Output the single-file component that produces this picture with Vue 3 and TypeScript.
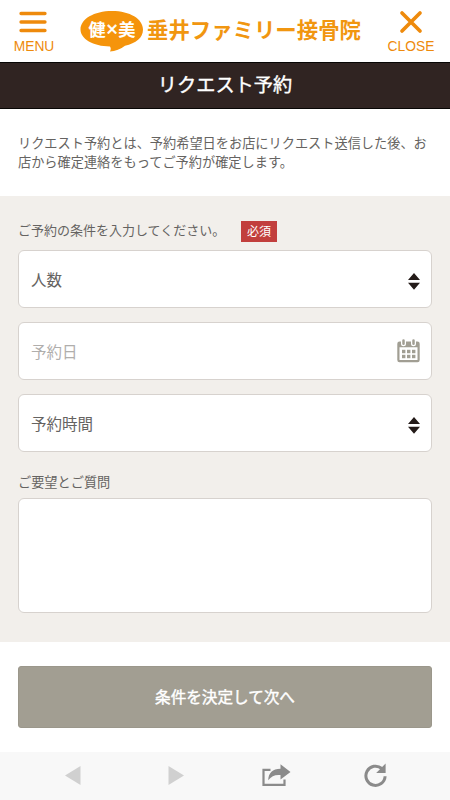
<script setup lang="ts">
import { ref } from 'vue'

interface Field {
  label: string
  kind: 'select' | 'date'
}

const fields: Field[] = [
  { label: '人数', kind: 'select' },
  { label: '予約日', kind: 'date' },
  { label: '予約時間', kind: 'select' },
]
const message = ref<string>('')
const dotColumns: number[] = [5, 10, 15]
const dotRows: number[] = [10.8, 15.8]
</script>

<template>
  <div class="screen">
    <header class="header">
      <button class="nav-button menu" type="button">
        <svg width="28" height="22" viewBox="0 0 28 22">
          <path d="M2 2.5H26M2 11H26M2 19.5H26" />
        </svg>
        <span>MENU</span>
      </button>
      <div class="logo">
        <div class="bubble">
          <svg width="64" height="41" viewBox="0 0 64 41">
            <path d="M32 0C14 0 .5 8 .5 18.5C.5 28 13 35.2 30 35.5C31 37 31 38.5 30 40.5C35 40.2 41 38 45 34.8C56 32 63 27 63 18.5C63 8 50 0 32 0Z" />
          </svg>
          <div class="bubble-text"><b>健</b><i>×</i><b>美</b></div>
        </div>
        <span class="logo-name">垂井ファミリー接骨院</span>
      </div>
      <button class="nav-button close" type="button">
        <svg width="24" height="24" viewBox="0 0 24 24">
          <path d="M3 3L21 21M21 3L3 21" />
        </svg>
        <span>CLOSE</span>
      </button>
    </header>

    <h1 class="title">リクエスト予約</h1>

    <p class="intro">リクエスト予約とは、予約希望日をお店にリクエスト送信した後、お店から確定連絡をもってご予約が確定します。</p>

    <section class="form">
      <div class="form-head">
        <span class="form-lead">ご予約の条件を入力してください。</span>
        <span class="required">必須</span>
      </div>
      <div class="fields">
        <div v-for="field in fields" :key="field.label" class="field" :class="field.kind">
          <span>{{ field.label }}</span>
          <svg v-if="field.kind === 'select'" class="arrows" width="12" height="17" viewBox="0 0 12 17">
            <path d="M6 0L12 7H0ZM0 9.8H12L6 16.8Z" />
          </svg>
          <svg v-else class="calendar" width="23" height="24" viewBox="0 0 23 24">
            <path class="frame" fill-rule="evenodd" d="M2.5 2.5H20.5Q22.7 2.5 22.7 4.7V21Q22.7 23.3 20.5 23.3H2.5Q.3 23.3 .3 21V4.7Q.3 2.5 2.5 2.5ZM2.5 8.3V21H20.5V8.3Z" />
            <path class="ring-gap" d="M6.5 2V4.7M16.5 2V4.7" />
            <path class="ring" d="M6.5 1.5V4.7M16.5 1.5V4.7" />
            <template v-for="y in dotRows" :key="y">
              <rect v-for="x in dotColumns" :key="x" :x="x" :y="y" width="3.4" height="3.4" />
            </template>
          </svg>
        </div>
      </div>
      <label class="message-label" for="message">ご要望とご質問</label>
      <textarea id="message" v-model="message" class="message"></textarea>
    </section>

    <div class="actions">
      <button class="submit" type="button">条件を決定して次へ</button>
    </div>

    <footer class="toolbar">
      <svg class="back" width="16" height="19" viewBox="0 0 16 19"><path d="M0 9.5L15.5 0V19Z" /></svg>
      <svg class="forward" width="16" height="19" viewBox="0 0 16 19"><path d="M.5 0L16 9.5L.5 19Z" /></svg>
      <svg class="share" width="29" height="23" viewBox="0 0 29 23">
        <path class="line" d="M8.5 5.8H1.5V20.8H22.5V15.5" />
        <path d="M18.5 .3L28.5 7.9L18.5 15.5V11C13 10.5 9.5 12 6.2 16.3C6.5 9 10.5 4.8 18.5 4.8Z" />
      </svg>
      <svg class="reload" width="24" height="25" viewBox="0 0 24 25">
        <path class="line" d="M17.8 5.5A9.6 9.6 0 1 0 21.1 13.2" />
        <path d="M21.6 .5V10H12.2Z" />
      </svg>
    </footer>
  </div>
</template>

<style>
body {
  margin: 0;
  background: #fff;
}
</style>

<style scoped>
.screen {
  display: flex;
  flex-direction: column;
  width: 450px;
  height: 800px;
  overflow: hidden;
  background: #fff;
  color: #656361;
  font-family: "Noto Sans CJK JP", sans-serif;
  font-size: 13.2px;
}
button {
  margin: 0;
  border: 0;
  padding: 0;
  font: inherit;
}
svg {
  display: block;
  flex: none;
}
.header {
  display: flex;
  flex: none;
  align-items: flex-start;
  box-sizing: border-box;
  height: 62px;
  color: #ee8a0c;
}
.nav-button {
  display: flex;
  flex-direction: column;
  align-items: center;
  background: none;
  color: inherit;
  font: 13.8px/16px "Liberation Sans", sans-serif;
}
.nav-button path {
  fill: none;
  stroke: currentColor;
  stroke-width: 3.3;
  stroke-linecap: round;
}
.menu {
  width: 68px;
  gap: 6px;
  padding-top: 11px;
}
.menu svg {
  margin-right: 2px;
}
.close {
  width: 60px;
  gap: 5px;
  margin-left: 10px;
  padding-top: 10px;
}
.close path {
  stroke-width: 3.7;
}
.logo {
  display: flex;
  width: 291px;
  margin-left: 12px;
  padding-top: 10.5px;
}
.bubble {
  position: relative;
  width: 64px;
  height: 41px;
  fill: #f5940b;
}
.bubble-text {
  position: absolute;
  top: 0;
  left: 8.5px;
  display: flex;
  width: 47px;
  height: 36px;
  justify-content: space-between;
  color: #fff;
  font-size: 17.2px;
  line-height: 35px;
}
.bubble-text i {
  width: 13px;
  font: normal 20px/36px "Liberation Sans", sans-serif;
  text-align: center;
  -webkit-text-stroke: 0.5px #fff;
}
.logo-name {
  margin-left: 3px;
  font-size: 21.4px;
  font-weight: 700;
  line-height: 36px;
  white-space: nowrap;
  color: #f19610;
}
.title {
  flex: none;
  box-sizing: border-box;
  height: 47px;
  margin: 0;
  border: solid #070605;
  border-width: 1px 0;
  background: #302422;
  color: #fff;
  font-size: 19.2px;
  font-weight: 400;
  line-height: 43px;
  text-align: center;
  -webkit-text-stroke: 0.4px #fff;
}
.intro {
  flex: none;
  box-sizing: border-box;
  height: 87px;
  margin: 0;
  padding: 24px 20px 0 18px;
  line-height: 19.4px;
}
.form {
  display: flex;
  flex: none;
  flex-direction: column;
  box-sizing: border-box;
  height: 446px;
  padding: 25px 18px 0;
  background: #f2efeb;
}
.form-head {
  display: flex;
  height: 29px;
}
.form-lead {
  width: 223px;
  font-size: 13px;
  line-height: 17px;
}
.required {
  width: 36px;
  height: 21px;
  background: #c23f3d;
  color: #fff;
  font-size: 12px;
  line-height: 20px;
  text-align: center;
}
.fields {
  display: flex;
  flex-direction: column;
  gap: 14px;
}
.field {
  display: flex;
  align-items: center;
  justify-content: space-between;
  box-sizing: border-box;
  height: 58px;
  border: 1px solid #d7d2ce;
  border-radius: 6px;
  padding: 0 11px 0 12px;
  background: #fff;
  font-size: 15.5px;
}
.field span {
  padding-bottom: 1px;
}
.date {
  color: #b0aeac;
}
.arrows {
  margin-top: 5px;
  fill: #241b19;
}
.calendar {
  fill: #a19e93;
}
.ring,
.ring-gap {
  stroke: #a19e93;
  stroke-width: 2.5;
  stroke-linecap: round;
}
.ring-gap {
  stroke: #fff;
  stroke-width: 5;
}
.message-label {
  margin-top: 20px;
  line-height: 20px;
}
.message {
  box-sizing: border-box;
  width: 100%;
  height: 115px;
  margin: 6px 0 0;
  border: 1px solid #d7d2ce;
  border-radius: 6px;
  padding: 10px;
  outline: 0;
  background: #fff;
  font: inherit;
  resize: none;
}
.actions {
  flex: none;
  box-sizing: border-box;
  height: 110px;
  padding: 24px 18px 0;
}
.submit {
  width: 100%;
  height: 62px;
  border: 1px solid #9b978b;
  border-radius: 3px;
  padding-bottom: 2px;
  background: #a29e92;
  color: #fff;
  font-size: 15.6px;
  -webkit-text-stroke: 0.4px #fff;
}
.toolbar {
  display: flex;
  flex: none;
  box-sizing: border-box;
  height: 48px;
  align-items: center;
  padding: 0 0 2px 64.5px;
  background: #f8f8f8;
  fill: #8b8b8b;
}
.back,
.forward {
  fill: #d0d0d0;
}
.forward {
  margin-left: 87.5px;
}
.share {
  margin-left: 78px;
}
.reload {
  margin-left: 72.5px;
}
.line {
  fill: none;
  stroke: #8b8b8b;
  stroke-width: 2.2;
}
.reload .line {
  stroke-width: 3;
}
</style>
